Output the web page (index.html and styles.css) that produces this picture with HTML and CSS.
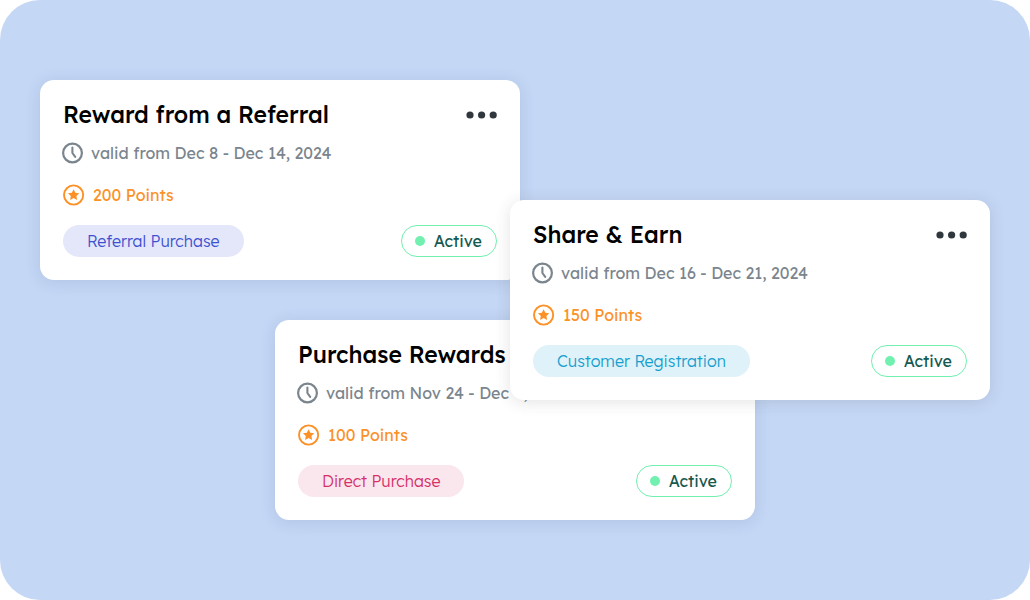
FILE: index.html
```html
<!DOCTYPE html>
<html lang="en">
<head>
<meta charset="UTF-8">
<meta name="viewport" content="width=device-width, initial-scale=1.0">
<title>Rewards</title>
<link rel="stylesheet" href="styles.css">
</head>
<body>

<!-- Shared icons -->
<svg class="sprite" aria-hidden="true">
  <symbol id="clock" viewBox="0 0 22 22" overflow="visible">
    <circle cx="9.5" cy="11" r="9.4" fill="none" stroke="currentColor" stroke-width="2.2"/>
    <path d="M9.4 5.6V11l2.8 3.8" fill="none" stroke="currentColor" stroke-width="2.1" stroke-linecap="round" stroke-linejoin="round"/>
  </symbol>
  <symbol id="star" viewBox="0 0 22 22">
    <circle cx="10.6" cy="11" r="9.6" fill="none" stroke="currentColor" stroke-width="1.9"/>
    <path d="M10.6 5.2l1.75 3.55 3.9.57-2.82 2.75.66 3.88-3.49-1.83-3.49 1.83.66-3.88-2.82-2.75 3.9-.57z" fill="currentColor"/>
  </symbol>
  <symbol id="dots" viewBox="0 0 31 8">
    <circle cx="4" cy="4" r="3.6"/>
    <circle cx="15.6" cy="4" r="3.6"/>
    <circle cx="27.2" cy="4" r="3.6"/>
  </symbol>
</svg>

<main class="board">

  <article class="card">
    <header class="card-head">
      <h2>Reward from a Referral</h2>
      <button class="more" type="button" aria-label="More options"><svg><use href="#dots"/></svg></button>
    </header>
    <p class="date"><svg><use href="#clock"/></svg>valid from Dec 8 - Dec 14, 2024</p>
    <p class="points"><svg><use href="#star"/></svg>200 Points</p>
    <footer class="card-foot">
      <span class="tag tag-referral">Referral Purchase</span>
      <span class="status">Active</span>
    </footer>
  </article>

  <article class="card card-front">
    <header class="card-head">
      <h2>Share &amp; Earn</h2>
      <button class="more" type="button" aria-label="More options"><svg><use href="#dots"/></svg></button>
    </header>
    <p class="date"><svg><use href="#clock"/></svg>valid from Dec 16 - Dec 21, 2024</p>
    <p class="points"><svg><use href="#star"/></svg>150 Points</p>
    <footer class="card-foot">
      <span class="tag tag-customer">Customer Registration</span>
      <span class="status">Active</span>
    </footer>
  </article>

  <article class="card card-middle">
    <header class="card-head">
      <h2>Purchase Rewards</h2>
      <button class="more" type="button" aria-label="More options"><svg><use href="#dots"/></svg></button>
    </header>
    <p class="date"><svg><use href="#clock"/></svg>valid from Nov 24 - Dec 4, 2024</p>
    <p class="points"><svg><use href="#star"/></svg>100 Points</p>
    <footer class="card-foot">
      <span class="tag tag-direct">Direct Purchase</span>
      <span class="status">Active</span>
    </footer>
  </article>

</main>

</body>
</html>
```
FILE: styles.css
```css
*{margin:0;padding:0;box-sizing:border-box}
body{font-family:'Lexend','Inter',sans-serif;font-size:16px;line-height:24px;background:#fff}
.sprite{position:absolute;width:0;height:0}

/* ---------------- Board ---------------- */
.board{
  min-height:100vh;padding:80px 40px;border-radius:40px;background:#c4d7f5;
  display:flex;flex-direction:column;align-items:flex-start
}

/* ---------------- Cards ---------------- */
.card{
  width:100%;max-width:480px;padding:20px 23px 23px;border-radius:14px;
  background:#fff;box-shadow:0 2px 16px rgba(60,70,110,.14)
}
.card + .card{margin-top:-80px}
.card-front{position:relative;z-index:2;align-self:flex-end;box-shadow:0 2px 16px rgba(60,60,60,.14)}
.card-middle{align-self:center}

.card-head{display:flex;align-items:center;justify-content:space-between;margin-bottom:11px}
.card-head h2{font-size:23px;line-height:30px;font-weight:500;color:#000}
.more{border:none;background:none;cursor:pointer;line-height:0}
.more svg{width:31px;height:8px;fill:#30383d}

.date,.points{display:flex;align-items:center;margin-bottom:18px}
.date svg,.points svg{width:22px;height:22px;flex:none;overflow:visible}
.date{gap:6px;color:#7b858e}
.points{gap:8px;color:#fb9127}

/* ---------------- Tags ---------------- */
.card-foot{display:flex;align-items:center;justify-content:space-between}
.tag{padding:4px 24px;border-radius:16px;font-weight:300}
.tag-referral{background:#e4e7f9;color:#3d51d0}
.tag-customer{background:#dff2f9;color:#149fce}
.tag-direct{background:#fae6ed;color:#d52f68}

.status{
  display:flex;align-items:center;gap:9px;padding:3px 14px 3px 13px;
  border:1px solid #72f0b0;border-radius:16px;color:#16594f
}
.status::before{content:"";width:10px;height:10px;border-radius:50%;background:#72f0b0}
```
